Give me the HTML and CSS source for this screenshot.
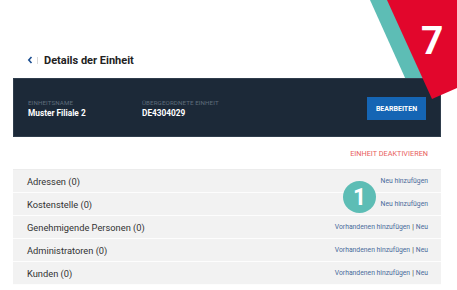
FILE: index.html
```html
<!DOCTYPE html>
<html lang="de">
  <head>
    <meta charset="UTF-8" />
    <meta name="viewport" content="width=device-width, initial-scale=1.0" />
    <title>Details der Einheit</title>
    <link rel="stylesheet" href="styles.css">
  </head>
  <body>
    <div class="page">
      <svg class="stripe" width="60" height="80" viewBox="0 0 60 80">
        <polygon points="0,0 18,0 54,80 36,80" fill="#5dbdb5" />
      </svg>
      <svg class="corner" width="70" height="100" viewBox="0 0 70 100">
        <polygon points="0,0 70,0 70,88 45,99" fill="#e2062c" />
      </svg>
      <span class="step">7</span>

      <div class="topbar">
        <a class="back" href="#">
          <svg width="6" height="8" viewBox="0 0 6 8"><path d="M4.5 1 L1.8 4 L4.5 7" fill="none" stroke="#1d4f91" stroke-width="1.6" /></svg>
        </a>
        <span class="sep"></span>
        <h1>Details der Einheit</h1>
      </div>

      <section class="unit">
        <div class="field name">
          <span class="label">EINHEITSNAME</span>
          <span class="value">Muster Filiale 2</span>
        </div>
        <div class="field">
          <span class="label">ÜBERGEORDNETE EINHEIT</span>
          <span class="value">DE4304029</span>
        </div>
        <button class="edit">BEARBEITEN</button>
      </section>

      <div class="actions">
        <a href="#" class="deactivate">EINHEIT DEAKTIVIEREN</a>
      </div>

      <ul class="sections">
        <li><span>Adressen (0)</span><span class="links"><a href="#">Neu hinzufügen</a></span></li>
        <li><span>Kostenstelle (0)</span><span class="links"><a href="#">Neu hinzufügen</a></span></li>
        <li><span>Genehmigende Personen (0)</span><span class="links"><a href="#">Vorhandenen hinzufügen</a><b>|</b><a href="#">Neu</a></span></li>
        <li><span>Administratoren (0)</span><span class="links"><a href="#">Vorhandenen hinzufügen</a><b>|</b><a href="#">Neu</a></span></li>
        <li><span>Kunden (0)</span><span class="links"><a href="#">Vorhandenen hinzufügen</a><b>|</b><a href="#">Neu</a></span></li>
      </ul>

      <span class="badge">1</span>
    </div>
  </body>
</html>
```

FILE: styles.css
```css
* {
  margin: 0;
  padding: 0;
  box-sizing: border-box;
}
body {
  background: #fff;
  font-family: Roboto, "Liberation Sans", sans-serif;
  color: #333;
}
a {
  text-decoration: none;
}
.page {
  position: relative;
  width: 457px;
  height: 290px;
  overflow: hidden;
  padding: 50px 16px 0 13px;
}

/* decoration in the top right corner */
.stripe {
  position: absolute;
  left: 370px;
  top: 0;
  z-index: 0;
}
.corner {
  position: absolute;
  left: 387px;
  top: 0;
  z-index: 2;
}
.step {
  position: absolute;
  left: 421px;
  top: 18px;
  z-index: 3;
  color: #fff;
  font-size: 39px;
  font-weight: 700;
  line-height: 46px;
}

.topbar {
  display: flex;
  align-items: center;
  height: 20px;
  padding-left: 14px;
  margin-bottom: 8px;
}
.back {
  display: flex;
  width: 6px;
}
.sep {
  width: 1px;
  height: 7px;
  background: #d8d8d8;
  margin: 0 6px 0 4px;
}
h1 {
  font-size: 11px;
  font-weight: 700;
  color: #222;
}

.unit {
  position: relative;
  z-index: 1;
  display: flex;
  align-items: center;
  height: 59px;
  padding: 2px 14px 0 14px;
  background: #1c2938;
  border: 1px solid #2f3d4c;
}
.field {
  display: flex;
  flex-direction: column;
}
.field.name {
  width: 114px;
}
.label {
  font-size: 6.2px;
  line-height: 8px;
  color: #5f6d7c;
  letter-spacing: 0.1px;
}
.value {
  font-size: 8.3px;
  line-height: 12px;
  font-weight: 700;
  color: #fff;
}
.edit {
  margin-left: auto;
  width: 59px;
  height: 23px;
  border: none;
  background: #1565b4;
  color: #fff;
  font-family: Roboto, "Liberation Sans", sans-serif;
  font-size: 7px;
  font-weight: 700;
}

.actions {
  display: flex;
  justify-content: flex-end;
  align-items: center;
  height: 32px;
  padding-right: 13px;
}
.deactivate {
  font-size: 7.3px;
  color: #e8605c;
}

.sections {
  list-style: none;
  border-top: 1px solid #ececec;
}
.sections li {
  display: flex;
  justify-content: space-between;
  align-items: center;
  height: 23px;
  padding: 0 13px 0 14px;
  background: #f2f2f2;
  border-bottom: 1px solid #fdfdfd;
  font-size: 9.3px;
  color: #333;
}
.links {
  font-size: 6.8px;
}
.links a {
  color: #4a6b9b;
}
.links b {
  font-weight: 400;
  color: #333;
  margin: 0 2px;
}

.badge {
  position: absolute;
  left: 343px;
  top: 181px;
  width: 33px;
  height: 32px;
  border-radius: 50%;
  background: #5dbdb5;
  color: #fff;
  font-size: 23px;
  font-weight: 700;
  display: flex;
  align-items: center;
  justify-content: center;
  z-index: 3;
}
```
